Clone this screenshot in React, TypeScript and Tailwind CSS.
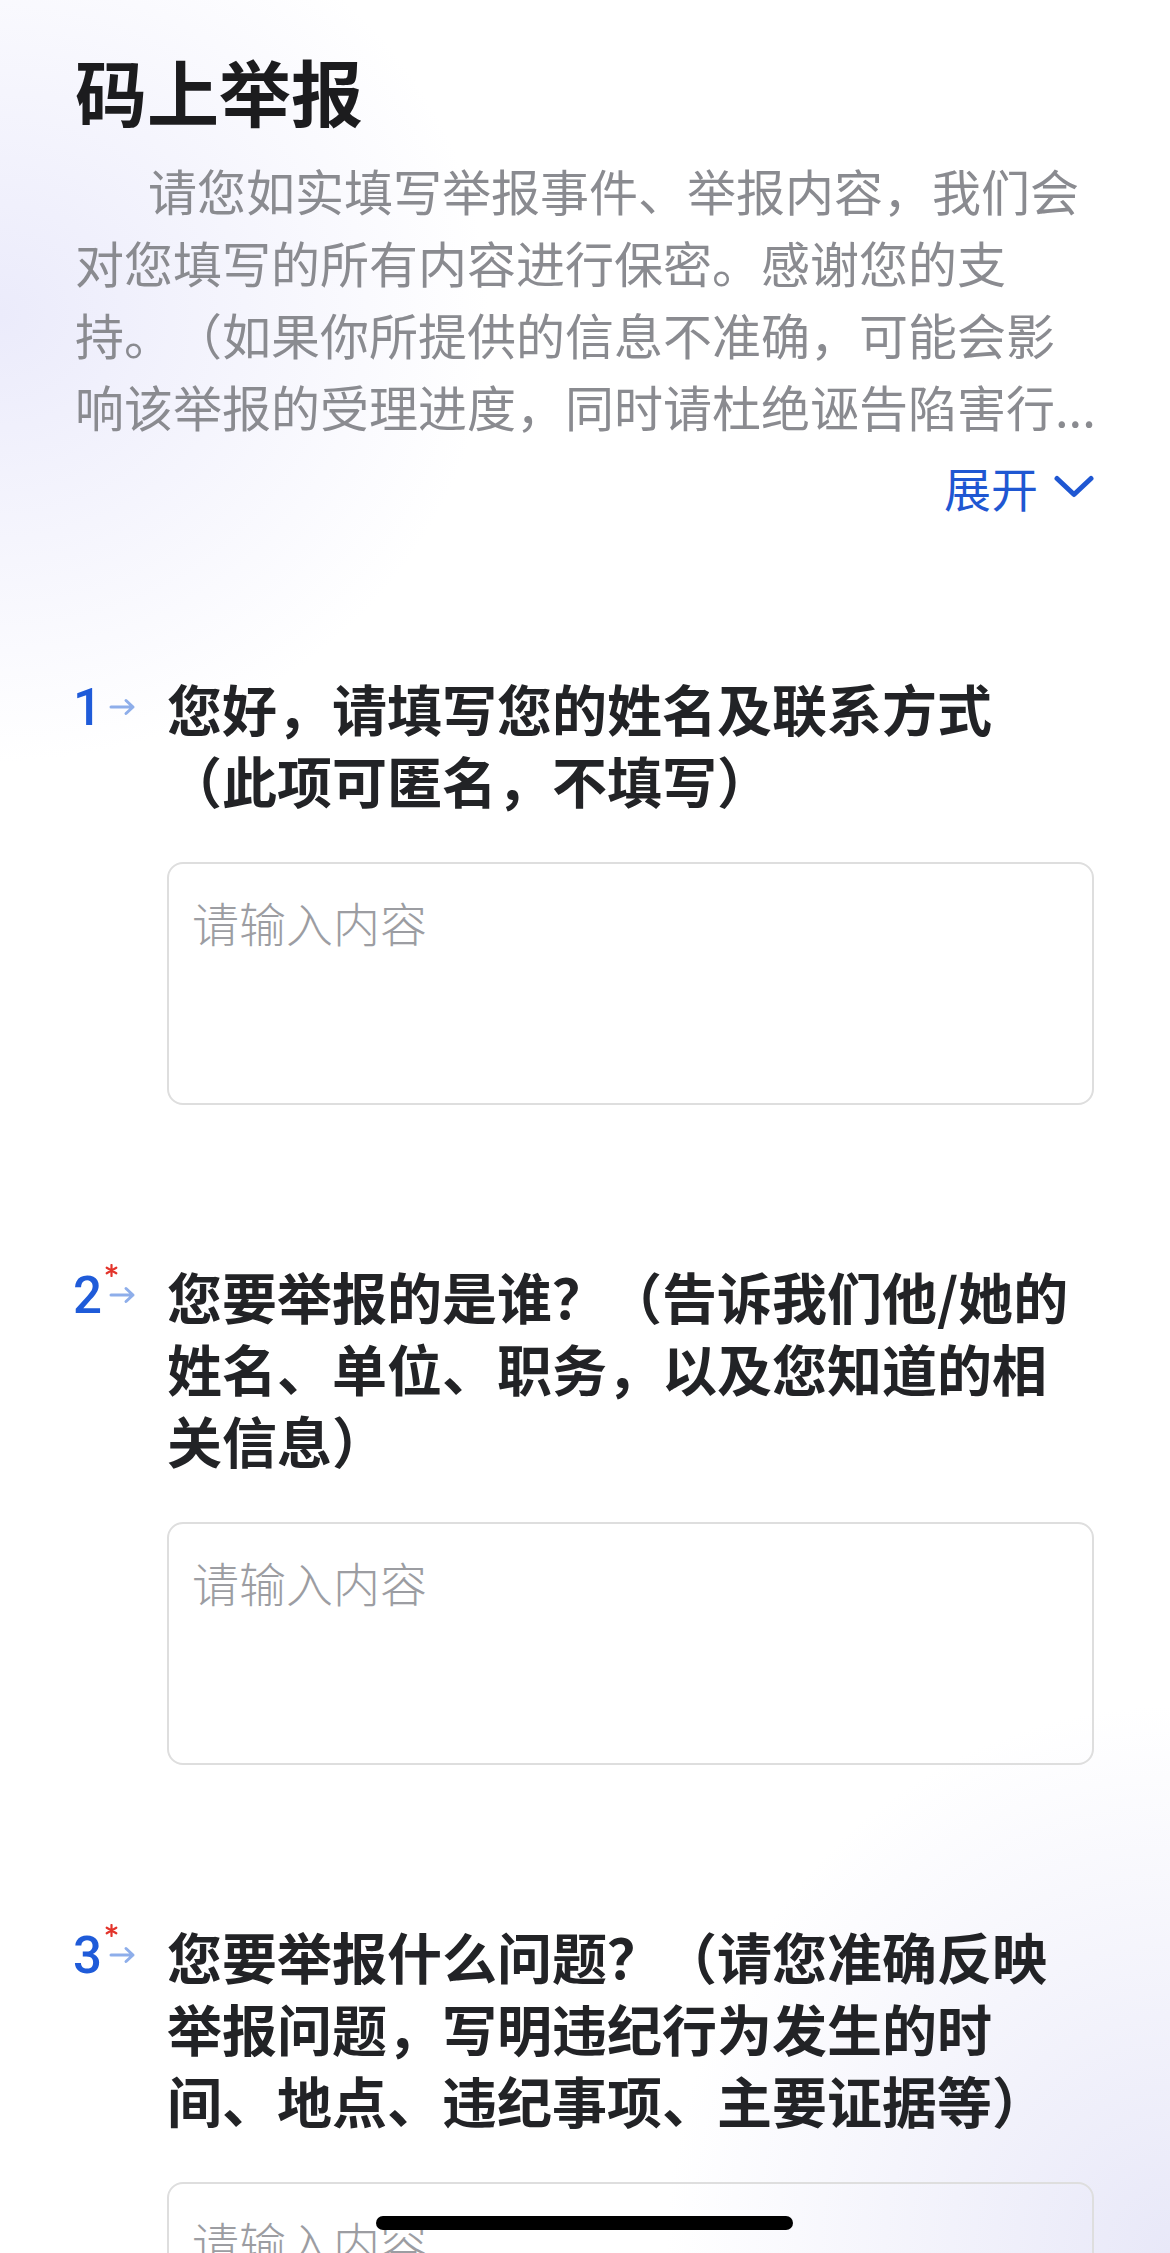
import { ReactNode } from 'react';

interface IQuestion {
  no: number;
  required: boolean;
  title: ReactNode;
}

const questions: IQuestion[] = [
  {
    no: 1,
    required: false,
    title: (
      <>
        您好，请填写您的姓名及联系方式
        <br />
        （此项可匿名，不填写）
      </>
    ),
  },
  {
    no: 2,
    required: true,
    title: '您要举报的是谁？（告诉我们他/她的姓名、单位、职务，以及您知道的相关信息）',
  },
  {
    no: 3,
    required: true,
    title: '您要举报什么问题？（请您准确反映举报问题，写明违纪行为发生的时间、地点、违纪事项、主要证据等）',
  },
];

const ArrowIcon = () => (
  <svg width="28" height="20" viewBox="0 0 28 20" fill="none" className="ml-[8px] shrink-0">
    <path d="M2 10h22M17 3.5l7 6.5-7 6.5" stroke="#8eaeea" strokeWidth="3" strokeLinecap="round" strokeLinejoin="round" />
  </svg>
);

const StarIcon = () => (
  <svg width="13" height="13" viewBox="0 0 13 13" className="absolute left-[30px] top-[5px]">
    <path d="M6.5 1v11M1.7 3.75l9.6 5.5M1.7 9.25l9.6-5.5" stroke="#e3342b" strokeWidth="2.2" strokeLinecap="round" />
  </svg>
);

const QuestionItem = ({ item }: { item: IQuestion }) => {
  return (
    <div className="mt-[154px] first:mt-[151px]">
      <div className="flex items-start">
        <div className="relative flex h-[72px] w-[92px] shrink-0 items-center">
          <span className="-ml-[2px] w-[28px] font-['Roboto',sans-serif] text-[51px] font-medium leading-none text-[#1f5bd9]">
            {item.no}
          </span>
          <ArrowIcon />
          {item.required && <StarIcon />}
        </div>
        <h2 className="flex-1 text-[55px] font-semibold leading-[72px] text-[#222326] [text-spacing-trim:space-all]">
          {item.title}
        </h2>
      </div>
      <textarea
        placeholder="请输入内容"
        className="ml-[92px] mt-[47px] block h-[243px] w-[927px] resize-none rounded-[16px] border-2 border-[#dedede] bg-transparent pl-[23px] pt-[28px] text-[47px] font-light leading-[60px] text-[#222] outline-none placeholder:text-[#9c9da2]"
      />
    </div>
  );
};

const App = () => {
  return (
    <div className="relative h-[2253px] w-[1170px] overflow-hidden bg-white bg-[radial-gradient(ellipse_680px_620px_at_0%_14%,#ebebfb_0%,rgba(255,255,255,0)_72%),radial-gradient(ellipse_700px_760px_at_100%_100%,#e8e8f8_0%,rgba(255,255,255,0)_72%)] font-['Noto_Sans_CJK_SC',sans-serif]">
      <div className="pl-[75px] pr-[76px] pt-[40px]">
        <h1 className="text-[72px] font-bold leading-[100px] text-[#1c1c1e]">码上举报</h1>
        <p className="mt-[14px] indent-[73px] text-[49px] leading-[72px] text-[#8a8b90] [text-spacing-trim:space-all]">
          请您如实填写举报事件、举报内容，我们会对您填写的所有内容进行保密。感谢您的支持。（如果你所提供的信息不准确，可能会影
          <span className="whitespace-nowrap">响该举报的受理进度，同时请杜绝诬告陷害行...</span>
        </p>
        <div className="mt-[15px] flex h-[60px] items-center justify-end">
          <span className="text-[47px] leading-[60px] text-[#1f57d2]">展开</span>
          <svg width="40" height="24" viewBox="0 0 40 24" fill="none" className="ml-[16px]">
            <path d="M3 3.5l17 16 17-16" stroke="#1f57d2" strokeWidth="5" strokeLinecap="round" strokeLinejoin="round" />
          </svg>
        </div>
        {questions.map((item) => (
          <QuestionItem key={item.no} item={item} />
        ))}
      </div>
      <div className="absolute bottom-[23px] left-[376px] h-[14px] w-[417px] rounded-full bg-black" />
    </div>
  );
};

export default App;
